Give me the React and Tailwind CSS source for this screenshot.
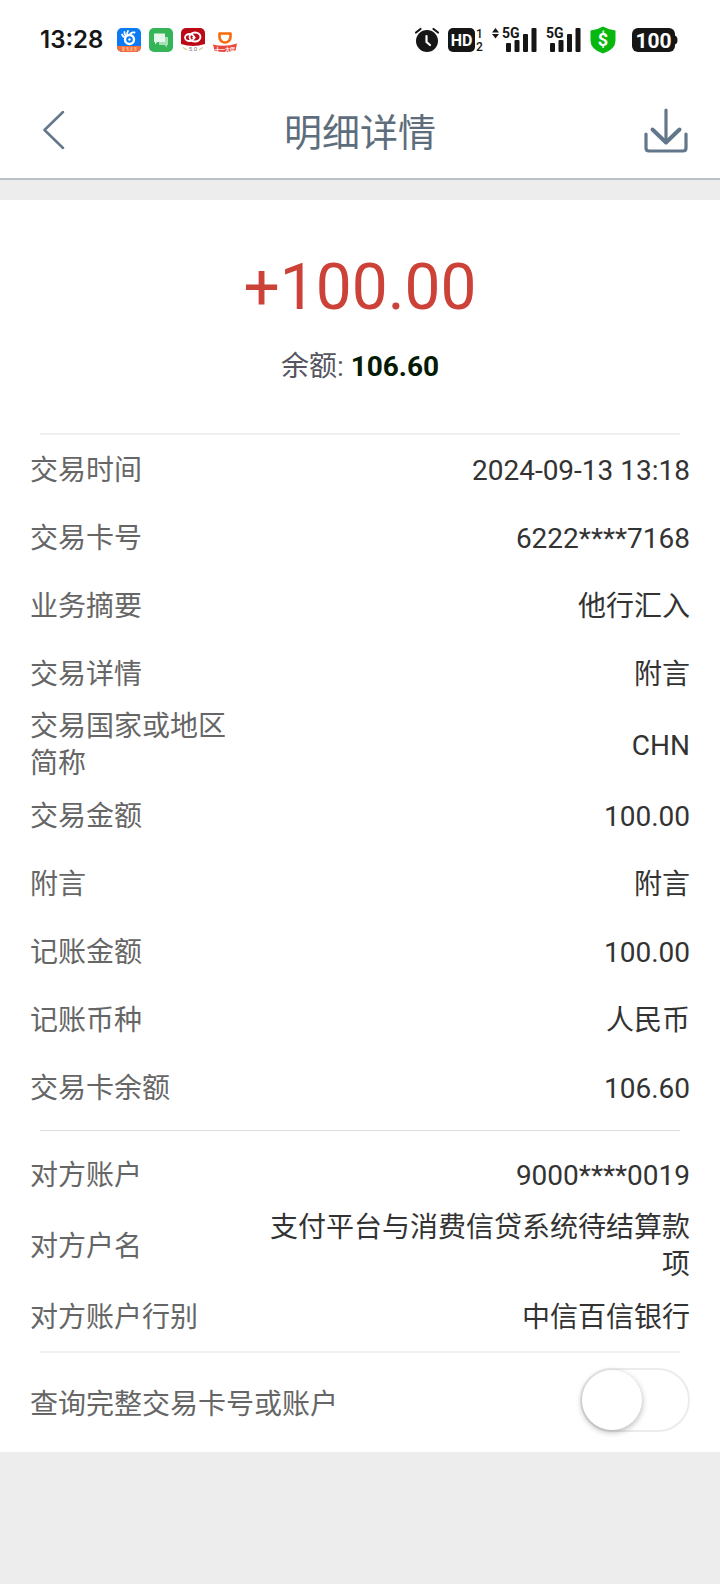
import { useState } from 'react';

const details = [
  { label: '交易时间', value: '2024-09-13 13:18' },
  { label: '交易卡号', value: '6222****7168' },
  { label: '业务摘要', value: '他行汇入' },
  { label: '交易详情', value: '附言' },
  { label: '交易国家或地区简称', value: 'CHN' },
  { label: '交易金额', value: '100.00' },
  { label: '附言', value: '附言' },
  { label: '记账金额', value: '100.00' },
  { label: '记账币种', value: '人民币' },
  { label: '交易卡余额', value: '106.60' },
];

const counterparty = [
  { label: '对方账户', value: '9000****0019' },
  { label: '对方户名', value: '支付平台与消费信贷系统待结算款项' },
  { label: '对方账户行别', value: '中信百信银行' },
];

function AppIcons() {
  return (
    <div className="flex items-center gap-2">
      <svg width="24" height="24" viewBox="0 0 24 24">
        <clipPath id="appClip"><rect width="24" height="24" rx="5" /></clipPath>
        <g clipPath="url(#appClip)">
          <rect width="24" height="24" fill="#0b7bf5" />
          <rect y="18" width="24" height="6" fill="#f4703c" />
          <circle cx="12.5" cy="11.500" r="4.5" fill="none" stroke="#fff" strokeWidth="2.4" />
          <circle cx="12.5" cy="11.500" r="1.2" fill="#fff" />
          <path d="M8 9.500Q5.500 8.500 5 6.500M9 8Q7 6 7.500 4M10.500 7.500Q9.500 5 11 3M12.500 7Q14 4 17.500 4.500" fill="none" stroke="#fff" strokeWidth="1.800" strokeLinecap="round" />
          <path d="M5 20h2.500M5 22h2.500M9 20h2.500M10 22h2M13.500 20h2M13 22h2.500M17 20h2.500M17.500 22h2" stroke="#ffd9c4" strokeWidth="1" />
        </g>
      </svg>
      <svg width="24" height="24" viewBox="0 0 24 24">
        <rect width="24" height="24" rx="5" fill="#35b558" />
        <path d="M10 9h9v8h-1v2.500L15.500 17H10z" fill="#a5dfb4" />
        <path d="M5 5.500h11v8.500H8.500L6 16.500V14H5z" fill="#e6f7ea" />
      </svg>
      <svg width="24" height="24" viewBox="0 0 24 24">
        <path d="M5 0h14a5 5 0 0 1 5 5v11q-12 4-24 0V5a5 5 0 0 1 5-5z" fill="#bb0a16" />
        <ellipse cx="8.500" cy="9.500" rx="4.500" ry="3.500" fill="none" stroke="#fff" strokeWidth="1.800" />
        <ellipse cx="14" cy="9" rx="5.500" ry="4.500" fill="none" stroke="#fff" strokeWidth="1.800" />
        <circle cx="13" cy="9.500" r="1.600" fill="#fff" />
        <path d="M2 19.500l4 2.500M22 19.500l-4 2.500" stroke="#d9c98b" strokeWidth="1.400" />
        <text x="12" y="23" textAnchor="middle" className="fill-[#777] font-['Roboto',sans-serif] text-[6px]">5.0</text>
      </svg>
      <svg width="24" height="24" viewBox="0 0 24 24">
        <path d="M6.500 5.500h11v3.500a5.500 5.500 0 0 1-11 0z" fill="none" stroke="#fa6a0a" strokeWidth="2.600" strokeLinejoin="round" />
        <path d="M0 16.500q12 3 24-1l-1.500 7q-10.500 3-21 0z" fill="#e8483c" />
        <text x="12" y="22.500" textAnchor="middle" className="fill-white font-['Noto_Sans_CJK_SC',sans-serif] text-[5px] font-bold">十一大促</text>
      </svg>
    </div>
  );
}

function Signal({ arrows }) {
  return (
    <svg width={arrows ? 46 : 36} height="34" viewBox={arrows ? '-10 -4 46 34' : '0 -4 36 34'} fill="#161616">
      {arrows && <path d="M-6.500 1l3.500 4.500h-7zM-6.500 11.500l3.500-4.500h-7z" />}
      <text x="0" y="11" className="font-['Roboto',sans-serif] text-sm font-bold">5G</text>
      <rect x="4" y="16" width="5" height="9" rx="1" />
      <rect x="12.500" y="13" width="5" height="12" rx="1" />
      <rect x="21" y="7" width="5" height="18" rx="1" />
      <rect x="29.500" y="1" width="5" height="24" rx="1" />
    </svg>
  );
}

function StatusBar() {
  return (
    <div className="flex h-20 items-center justify-between pr-[42px] pl-10">
      <div className="flex items-center gap-3.5">
        <span className="font-['Inter',sans-serif] text-2xl font-semibold text-[#161616]">13:28</span>
        <AppIcons />
      </div>
      <div className="flex items-center gap-2">
        <svg width="26" height="26" viewBox="0 0 26 26">
          <circle cx="13" cy="14" r="11" fill="#161616" />
          <path d="M2 5.500L6.500 2M24 5.500L19.500 2" stroke="#161616" strokeWidth="2.200" strokeLinecap="round" />
          <path d="M12.500 9v6l3.500 3" fill="none" stroke="#fff" strokeWidth="2.200" strokeLinecap="round" strokeLinejoin="round" />
        </svg>
        <svg width="36" height="30" viewBox="0 -2 36 30">
          <rect x="0" y="1" width="27" height="24" rx="5" fill="#161616" />
          <text x="13.500" y="19" textAnchor="middle" className="fill-white font-['Roboto',sans-serif] text-base font-bold">HD</text>
          <text x="28" y="11" className="fill-[#161616] font-['Roboto',sans-serif] text-xs font-medium">1</text>
          <text x="28" y="24" className="fill-[#161616] font-['Roboto',sans-serif] text-xs font-medium">2</text>
        </svg>
        <Signal arrows />
        <Signal />
        <svg width="26" height="28" viewBox="0 0 26 28">
          <path d="M13 0.500q6 3.500 12.500 4v10q0 9-12.500 13Q0.500 23.500 0.500 14.500v-10Q7 4 13 0.500z" fill="#08b80f" />
          <text x="13" y="20" textAnchor="middle" className="fill-white font-['Roboto',sans-serif] text-lg font-bold">$</text>
        </svg>
        <svg width="46" height="24" viewBox="0 0 46 24" className="ml-2">
          <rect width="43" height="24" rx="6" fill="#161616" />
          <path d="M42 7.500q3.500 0 3.500 4.500t-3.500 4.500z" fill="#161616" />
          <text x="21.500" y="19.500" textAnchor="middle" className="fill-white font-['Roboto',sans-serif] text-[21px] font-bold">100</text>
        </svg>
      </div>
    </div>
  );
}

function Header() {
  return (
    <header className="flex h-[100px] items-center justify-between border-b-2 border-[#b9c1c8] px-[31px] pt-1 text-[#62778a]">
      <button type="button" aria-label="返回" className="flex h-12 w-12 items-center justify-center">
        <svg width="24" height="40" viewBox="0 0 24 40" fill="none" stroke="currentColor" strokeWidth="2.500" strokeLinecap="round" strokeLinejoin="round">
          <path d="M20 1L1.500 19L20 37" />
        </svg>
      </button>
      <h1 className="pt-1 text-[38px] leading-none text-[#5d6d7b]">明细详情</h1>
      <button type="button" aria-label="下载" className="flex h-12 w-12 items-center justify-end">
        <svg width="46" height="46" viewBox="0 0 46 46" fill="none" stroke="currentColor" strokeLinecap="round" strokeLinejoin="round">
          <path d="M23 2v32" strokeWidth="3.200" />
          <path d="M9.500 21.500L23 34.500l13.500-13" strokeWidth="4" />
          <path d="M3 26v14q0 3 3 3h34q3 0 3-3V26" strokeWidth="3.200" />
        </svg>
      </button>
    </header>
  );
}

function DetailList({ items }) {
  return (
    <dl className="pt-px">
      {items.map((item, index) => (
        <div key={index} className="flex min-h-[68px] items-center justify-between px-[30px]">
          <dt className="w-1/3 text-[#666]">{item.label}</dt>
          <dd className="w-2/3 text-right text-[#333]">{item.value}</dd>
        </div>
      ))}
    </dl>
  );
}

export default function App() {
  const [showFull, setShowFull] = useState(false);

  return (
    <div className="min-h-screen bg-[#ededed] font-['Roboto','Noto_Sans_CJK_SC',sans-serif] text-[28px] leading-[37px]">
      <div className="bg-white">
        <StatusBar />
        <Header />
      </div>

      <main className="mt-5 bg-white pb-5">
        {/* Amount and balance */}
        <section className="pt-14 pb-12 text-center">
          <p className="text-[64px] leading-none text-[#cc4138]">+100.00</p>
          <p className="mt-7 text-[#555560]">
            余额: <strong className="font-bold text-[#031a03]">106.60</strong>
          </p>
        </section>

        <hr className="mx-10 border-t-2 border-[#f0f0f0]" />
        <DetailList items={details} />

        <hr className="mx-10 mt-2 mb-[9px] border-t border-[#dedede]" />
        <DetailList items={counterparty} />

        <hr className="mx-10 border-t-2 border-[#f0f0f0]" />
        <div className="flex items-center justify-between px-[30px] pt-[15px]">
          <label htmlFor="show-full" className="pt-2 text-[#666]">查询完整交易卡号或账户</label>
          <input
            id="show-full"
            type="checkbox"
            role="switch"
            checked={showFull}
            onChange={(e) => setShowFull(e.target.checked)}
            className="h-16 w-[110px] appearance-none rounded-full border-2 border-[#ececec] bg-white before:block before:h-[60px] before:w-[60px] before:rounded-full before:bg-white before:shadow-[0_2px_6px_rgba(0,0,0,0.3)] before:transition-transform checked:bg-green-500 checked:before:translate-x-[46px]"
          />
        </div>
      </main>
    </div>
  );
}
